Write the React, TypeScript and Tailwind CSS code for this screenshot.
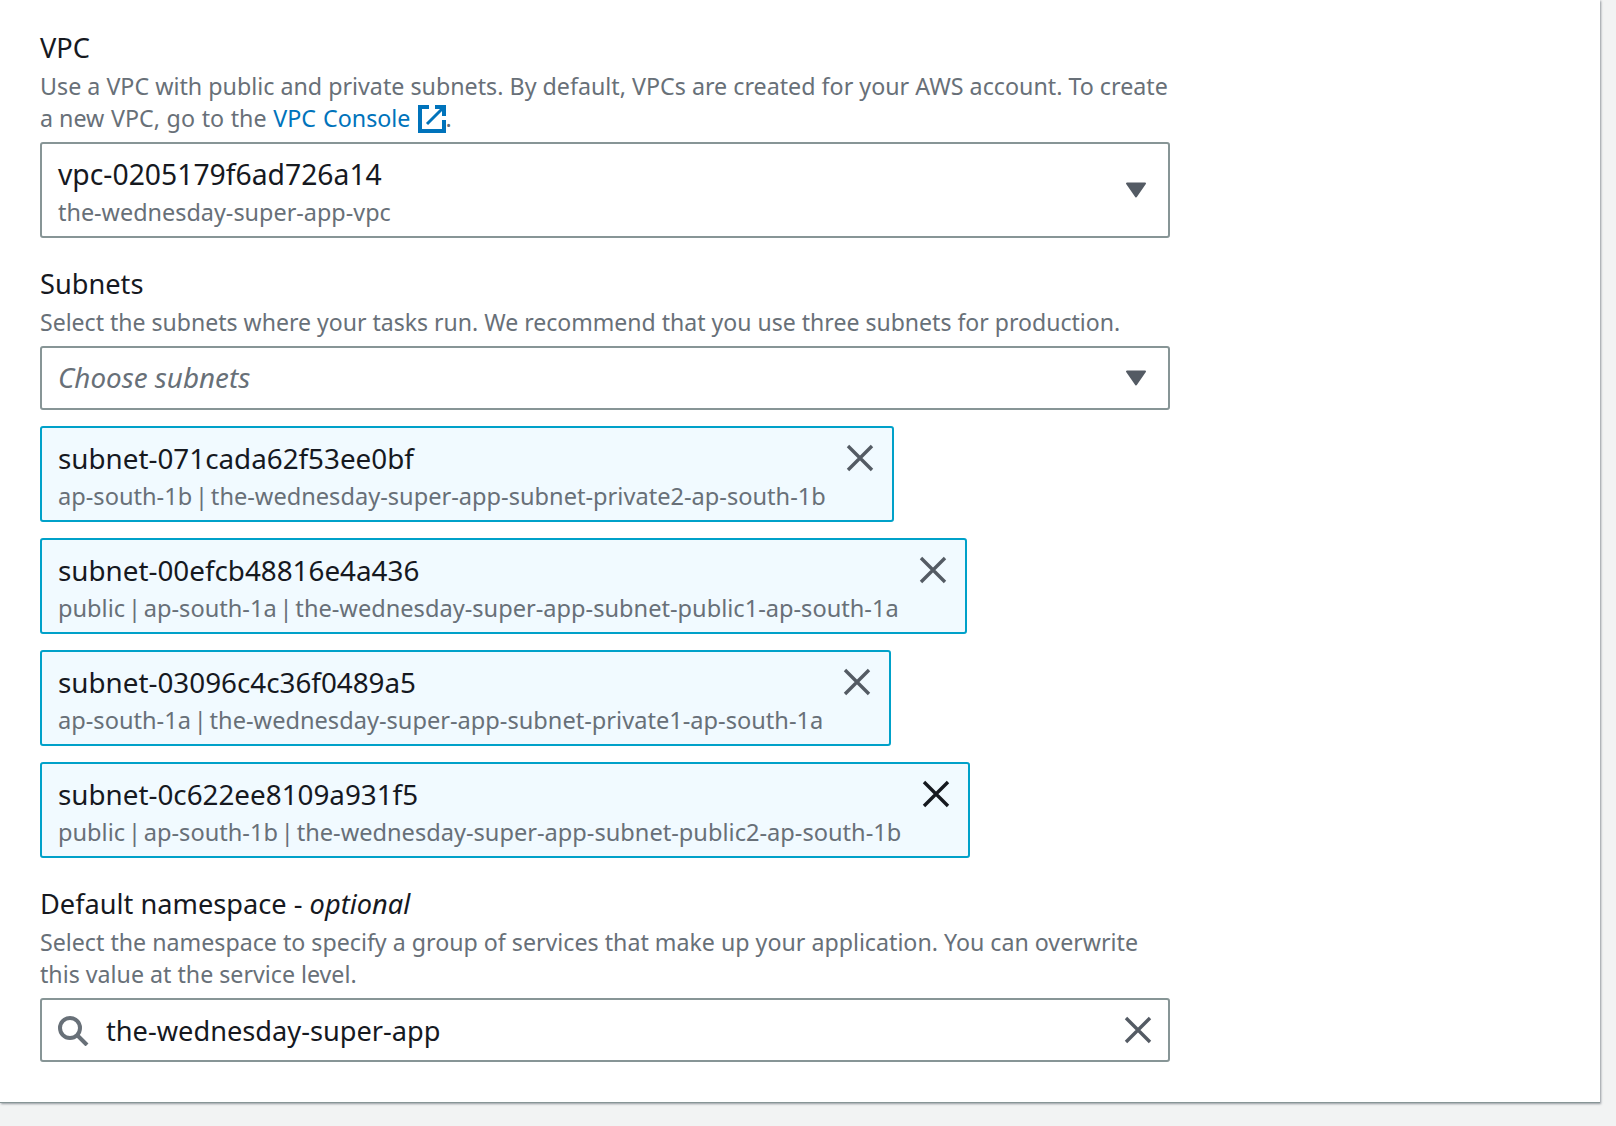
import type { ReactNode } from "react";

const FONT = "font-['Noto_Sans','Open_Sans',sans-serif]";

function Caret() {
  return (
    <svg width="22" height="16" viewBox="0 0 22 16" className="shrink-0">
      <path d="M2 1.500h18L11 14.500z" fill="#545b64" stroke="#545b64" strokeWidth="2" strokeLinejoin="round" />
    </svg>
  );
}

function Dismiss({ color = "#545b64" }: { color?: string }) {
  return (
    <svg width="28" height="28" viewBox="0 0 28 28" className="shrink-0">
      <path d="M2 2l24 24M26 2L2 26" stroke={color} strokeWidth="3.4" fill="none" />
    </svg>
  );
}

function ExternalIcon() {
  return (
    <svg width="28" height="28" viewBox="0 0 28 28" className="inline-block align-[-6px] ml-[1px]">
      <path d="M11 2H2v24h24V15" fill="none" stroke="#0073bb" strokeWidth="4" />
      <path d="M17 2h9v9" fill="none" stroke="#0073bb" strokeWidth="4" />
      <path d="M25.500 2.500L9 19" fill="none" stroke="#0073bb" strokeWidth="3" />
    </svg>
  );
}

function Label({ children, className }: { children: ReactNode; className: string }) {
  return <div className={`text-[27.200px] leading-[40px] text-[#16191f] ${className}`}>{children}</div>;
}

function Desc({ children, className }: { children: ReactNode; className: string }) {
  return <p className={`leading-[32px] text-[#687078] ${className}`}>{children}</p>;
}

function TwoLine({ id, sub, idSize, subSize }: { id: string; sub: string; idSize: string; subSize: string }) {
  return (
    <div className="self-start">
      <div className={`${idSize} leading-[40px] text-[#16191f] mt-[10px]`}>{id}</div>
      <div className={`${subSize} [word-spacing:-3.300px] leading-[32px] text-[#687078] whitespace-nowrap mt-[2px]`}>{sub}</div>
    </div>
  );
}

const tokens = [
  { id: "subnet-071cada62f53ee0bf", sub: "ap-south-1b | the-wednesday-super-app-subnet-private2-ap-south-1b", w: "w-[854px]" },
  { id: "subnet-00efcb48816e4a436", sub: "public | ap-south-1a | the-wednesday-super-app-subnet-public1-ap-south-1a", w: "w-[927px]" },
  { id: "subnet-03096c4c36f0489a5", sub: "ap-south-1a | the-wednesday-super-app-subnet-private1-ap-south-1a", w: "w-[851px]" },
  { id: "subnet-0c622ee8109a931f5", sub: "public | ap-south-1b | the-wednesday-super-app-subnet-public2-ap-south-1b", w: "w-[930px]", dark: true },
];

export default function App() {
  return (
    <div className={`w-[1616px] h-[1126px] bg-[#f2f3f3] overflow-hidden ${FONT}`}>
      <div className="w-[1600px] h-[1103px] bg-white pl-10 pt-[28px] shadow-[1px_1px_2px_rgba(84,91,100,0.6)] border-b border-[#879596]">
        <div className="w-[1130px] flex flex-col">
          <Label className="">VPC</Label>
          <Desc className="text-[23.250px] mt-[2px]">
            Use a VPC with public and private subnets. By default, VPCs are created for your AWS account. To create a{" "}
            <span className="[word-spacing:0.600px]">new VPC, go to the </span>
            <span className="text-[#0073bb] [word-spacing:1px]">VPC Console</span> <ExternalIcon />.
          </Desc>
          <div className="mt-[8px] h-[96px] border-2 border-[#879596] rounded-[3px] pl-[16px] pr-[21px] flex items-center justify-between">
            <TwoLine id="vpc-0205179f6ad726a14" sub="the-wednesday-super-app-vpc" idSize="text-[28.300px]" subSize="text-[23.400px]" />
            <Caret />
          </div>

          <Label className="mt-[26px]">Subnets</Label>
          <Desc className="text-[23.050px] mt-[2px]">
            Select the subnets where your tasks run. We recommend that you use three subnets for production.
          </Desc>
          <div className="mt-[8px] h-[64px] border-2 border-[#879596] rounded-[3px] pl-[16px] pr-[21px] flex items-center justify-between">
            <span className="text-[27.800px] italic text-[#687078]">Choose subnets</span>
            <Caret />
          </div>

          <div className="mt-4 flex flex-col gap-4">
            {tokens.map((t) => (
              <div key={t.id} className={`${t.w} h-[96px] border-2 border-[#00a1c9] rounded-[3px] bg-[#f1faff] pl-[16px] pr-[18px] flex justify-between`}>
                <TwoLine id={t.id} sub={t.sub} idSize="text-[27.800px]" subSize="text-[23.600px]" />
                <div className="mt-[16px]">
                  <Dismiss color={t.dark ? "#16191f" : "#545b64"} />
                </div>
              </div>
            ))}
          </div>

          <Label className="mt-[26px]">
            Default namespace - <i>optional</i>
          </Label>
          <Desc className="text-[23.200px] mt-[2px]">
            Select the namespace to specify a group of services that make up your application. You can overwrite this value at the service level.
          </Desc>
          <div className="mt-[8px] h-[64px] border-2 border-[#879596] rounded-[3px] pl-[16px] pr-[16px] flex items-center">
            <svg width="32" height="32" viewBox="0 0 32 32" className="shrink-0">
              <circle cx="12" cy="14" r="10" fill="none" stroke="#687078" strokeWidth="4" />
              <path d="M19 21l10 10" stroke="#687078" strokeWidth="4" fill="none" />
            </svg>
            <span className="ml-[16px] pt-[2px] text-[27.200px] text-[#16191f]">the-wednesday-super-app</span>
            <span className="ml-auto"><Dismiss /></span>
          </div>
        </div>
      </div>
    </div>
  );
}
